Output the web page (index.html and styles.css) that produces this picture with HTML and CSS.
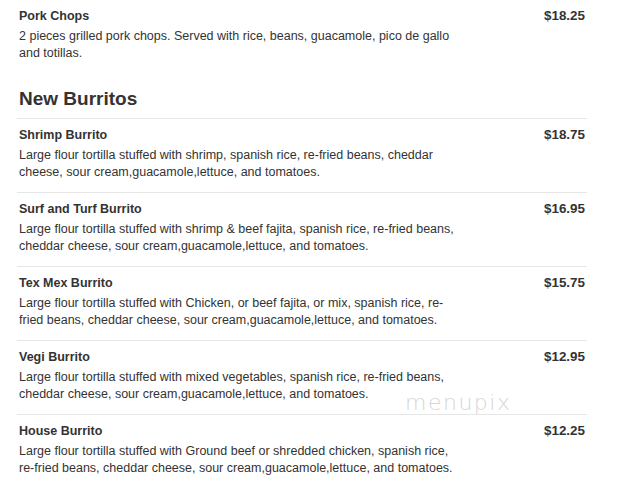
FILE: index.html
```html
<!DOCTYPE html>
<html lang="en">
<head>
    <meta charset="UTF-8">
    <meta name="viewport" content="width=device-width, initial-scale=1.0">
    <title>Menu - New Burritos</title>
    <link rel="stylesheet" href="styles.css">
</head>
<body>
    <div class="menu">
        <div class="item first">
            <div class="item-head">
                <span class="item-name">Pork Chops</span>
                <span class="item-price">$18.25</span>
            </div>
            <p class="item-desc">2 pieces grilled pork chops. Served with rice, beans, guacamole, pico de gallo and totillas.</p>
        </div>

        <h2 class="section-title">New Burritos</h2>

        <div class="item">
            <div class="item-head">
                <span class="item-name">Shrimp Burrito</span>
                <span class="item-price">$18.75</span>
            </div>
            <p class="item-desc">Large flour tortilla stuffed with shrimp, spanish rice, re-fried beans, cheddar cheese, sour cream,guacamole,lettuce, and tomatoes.</p>
        </div>
        <div class="item">
            <div class="item-head">
                <span class="item-name">Surf and Turf Burrito</span>
                <span class="item-price">$16.95</span>
            </div>
            <p class="item-desc">Large flour tortilla stuffed with shrimp &amp; beef fajita, spanish rice, re-fried beans, cheddar cheese, sour cream,guacamole,lettuce, and tomatoes.</p>
        </div>
        <div class="item">
            <div class="item-head">
                <span class="item-name">Tex Mex Burrito</span>
                <span class="item-price">$15.75</span>
            </div>
            <p class="item-desc">Large flour tortilla stuffed with Chicken, or beef fajita, or mix, spanish rice, re-fried beans, cheddar cheese, sour cream,guacamole,lettuce, and tomatoes.</p>
        </div>
        <div class="item">
            <div class="item-head">
                <span class="item-name">Vegi Burrito</span>
                <span class="item-price">$12.95</span>
            </div>
            <p class="item-desc">Large flour tortilla stuffed with mixed vegetables, spanish rice, re-fried beans, cheddar cheese, sour cream,guacamole,lettuce, and tomatoes.</p>
        </div>
        <div class="item">
            <div class="item-head">
                <span class="item-name">House Burrito</span>
                <span class="item-price">$12.25</span>
            </div>
            <p class="item-desc">Large flour tortilla stuffed with Ground beef or shredded chicken, spanish rice, re-fried beans, cheddar cheese, sour cream,guacamole,lettuce, and tomatoes.</p>
        </div>

        <div class="watermark">menupix</div>
    </div>
</body>
</html>
```

FILE: styles.css
```css
body {
    margin: 0;
    background-color: #fff;
    color: #333;
    font-family: "Liberation Sans", Arial, sans-serif;
}
.menu {
    position: relative;
    width: 570px;
    margin-left: 17px;
}
.item {
    padding: 7px 2px 11px;
    border-top: 1px solid #e6e6e6;
}
.item.first {
    border-top: none;
    padding-top: 7px;
    padding-bottom: 10px;
}
.item-head {
    display: flex;
    justify-content: space-between;
    line-height: 18px;
    margin-bottom: 3px;
}
.item-name {
    font-weight: bold;
    font-size: 12.5px;
}
.item-price {
    font-weight: bold;
    font-size: 13.4px;
}
.item-desc {
    margin: 0;
    max-width: 444px;
    font-size: 12.5px;
    line-height: 17px;
}
.section-title {
    margin: 15px 0 0;
    padding: 0 2px 8px;
    font-size: 19px;
    line-height: 23px;
    font-weight: bold;
}
.watermark {
    position: absolute;
    left: 388px;
    top: 392px;
    font-family: "DejaVu Sans", sans-serif;
    font-weight: 200;
    font-size: 22px;
    line-height: 22px;
    letter-spacing: 1.5px;
    color: #d6d6d6;
}
```
